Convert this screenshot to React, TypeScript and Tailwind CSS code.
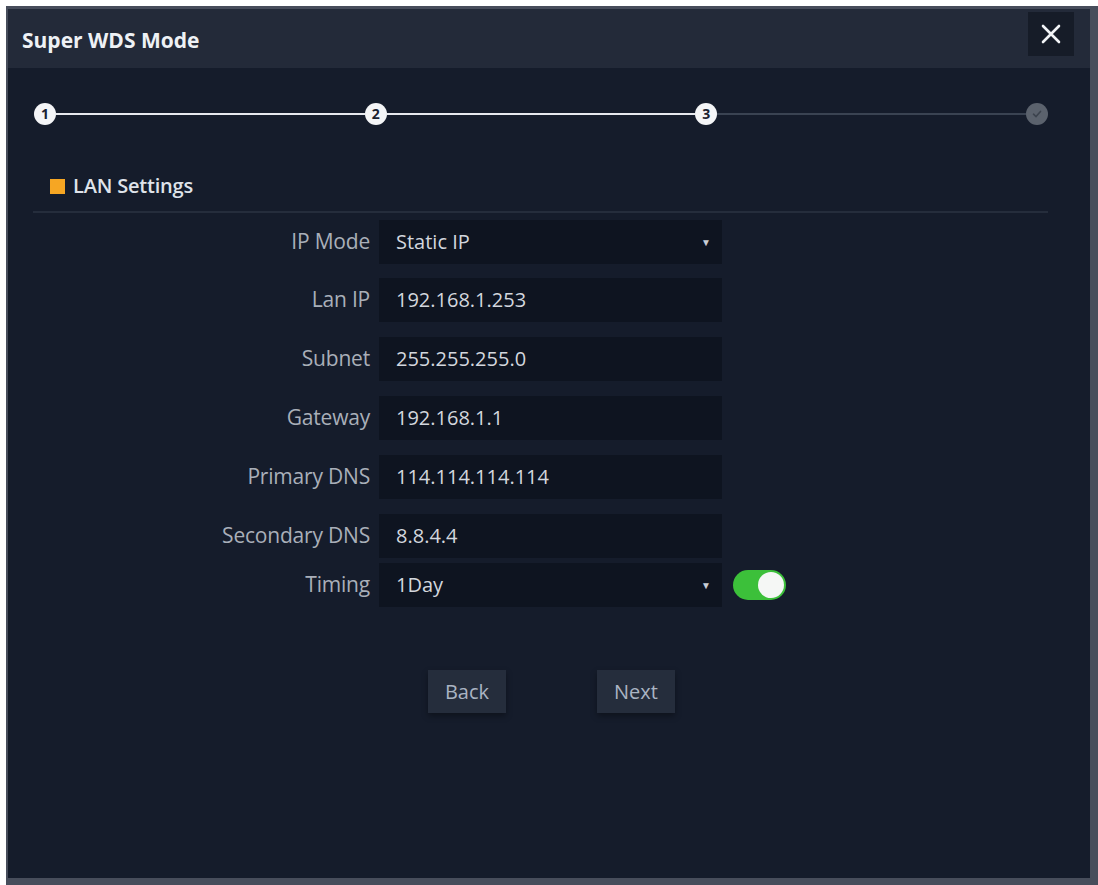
import React from "react";

const font = { fontFamily: '"Open Sans", "Noto Sans", "Liberation Sans", sans-serif' };

function Step({ n, done = true }: { n: string; done?: boolean }) {
  if (!done) {
    return (
      <div className="w-[22px] h-[22px] rounded-full bg-[#5b626d] flex items-center justify-center shrink-0">
        <svg width="12" height="12" viewBox="0 0 12 12">
          <path d="M2.5 6.2 L5 8.6 L9.5 3.4" stroke="#3c434e" strokeWidth="1.6" fill="none" strokeLinecap="round" />
        </svg>
      </div>
    );
  }
  return (
    <div className="w-[22px] h-[22px] rounded-full bg-[#f4f5f7] flex items-center justify-center shrink-0 text-[14px] font-bold text-[#1a2130] leading-none">
      {n}
    </div>
  );
}

function Row({ label, value, select, toggle }: { label: string; value: string; select?: boolean; toggle?: boolean }) {
  return (
    <div className="flex items-center">
      <div className="w-[362px] text-right text-[21px] text-[#a9afb9] tracking-[-0.2px]">{label}</div>
      <div className="ml-[9px] w-[343px] h-[44px] bg-[#0e1420] flex items-center pl-[17px] pr-[11px] text-[20px] text-[#d3d7de]">
        <span className="flex-1">{value}</span>
        {select && <span className="text-[10px] text-[#c9ced6]">▼</span>}
      </div>
      {toggle && (
        <div className="ml-[11px] w-[53px] h-[30px] rounded-full bg-[#3cc03a] flex items-center justify-end pr-[2px]">
          <div className="w-[26px] h-[26px] rounded-full bg-[#f5f7f5]" />
        </div>
      )}
    </div>
  );
}

export default function App() {
  return (
    <div className="w-[1098px] h-[885px] bg-white overflow-hidden pt-[6px] pl-[6px]" style={font}>
      <div className="w-[1092px] h-[879px] bg-[#474d5b] pt-[3px] pl-[2px] pr-[8px] pb-[7px] flex">
        <div className="flex-1 flex flex-col bg-[#151c2b]">
          <div className="h-[59px] bg-[#232a39] flex items-center justify-between pl-[14px] pr-[16px]">
            <div className="text-[21px] font-bold text-[#eef1f5] mt-[4px]">Super WDS Mode</div>
            <div className="w-[46px] h-[44px] bg-[#161c28] flex items-center justify-center self-start mt-[3px]">
              <svg width="22" height="22" viewBox="0 0 22 22">
                <path d="M3 3 L19 19 M19 3 L3 19" stroke="#f2f4f7" strokeWidth="2.6" strokeLinecap="round" />
              </svg>
            </div>
          </div>

          <div className="flex items-center pl-[26px] pr-[42px] mt-[35px]">
            <Step n="1" />
            <div className="flex-1 h-[2px] bg-[#e7e9ee]" />
            <Step n="2" />
            <div className="flex-1 h-[2px] bg-[#e7e9ee]" />
            <Step n="3" />
            <div className="flex-1 h-[2px] bg-[#3a4352]" />
            <Step n="" done={false} />
          </div>

          <div className="flex items-center ml-[42px] mt-[46px]">
            <div className="w-[15px] h-[15px] bg-[#f6a623]" />
            <div className="ml-[8px] text-[20px] font-semibold text-[#dfe3ea] tracking-[-0.2px]">LAN Settings</div>
          </div>
          <div className="ml-[25px] mr-[42px] mt-[10px] h-[2px] bg-[#252d3c]" />

          <div className="flex flex-col mt-[7px]">
            <Row label="IP Mode" value="Static IP" select />
            <div className="mt-[14px]"><Row label="Lan IP" value="192.168.1.253" /></div>
            <div className="mt-[15px]"><Row label="Subnet" value="255.255.255.0" /></div>
            <div className="mt-[15px]"><Row label="Gateway" value="192.168.1.1" /></div>
            <div className="mt-[15px]"><Row label="Primary DNS" value="114.114.114.114" /></div>
            <div className="mt-[15px]"><Row label="Secondary DNS" value="8.8.4.4" /></div>
            <div className="mt-[5px]"><Row label="Timing" value="1Day" select toggle /></div>
          </div>

          <div className="flex ml-[420px] mt-[63px] gap-[91px]">
            <div className="w-[78px] h-[43px] bg-[#252d3c] flex items-center justify-center text-[20px] text-[#aab4c3] shadow-[0_3px_6px_rgba(0,0,0,0.35)]">Back</div>
            <div className="w-[78px] h-[43px] bg-[#252d3c] flex items-center justify-center text-[20px] text-[#aab4c3] shadow-[0_3px_6px_rgba(0,0,0,0.35)]">Next</div>
          </div>
        </div>
      </div>
    </div>
  );
}
